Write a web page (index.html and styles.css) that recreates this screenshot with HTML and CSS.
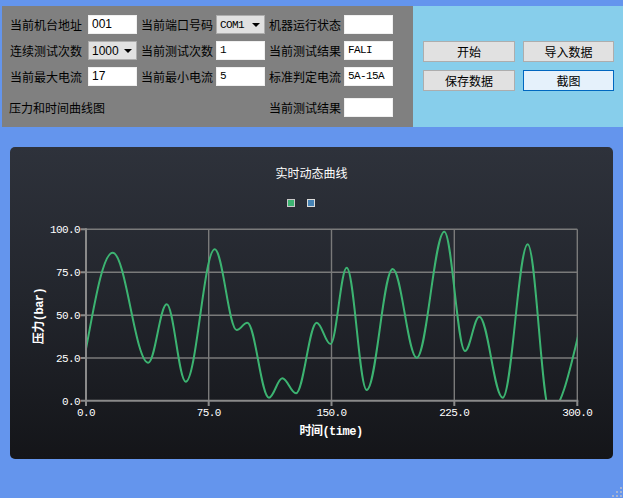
FILE: index.html
```html
<!DOCTYPE html>
<html lang="zh-CN">
<head>
<meta charset="utf-8">
<title>压力测试</title>
<link rel="stylesheet" href="styles.css">
</head>
<body>
<div class="top">
  <div class="params">
    <div class="lbl">当前机台地址</div>
    <div class="inp sans">001</div>
    <div class="lbl">当前端口号码</div>
    <div class="sel mono"><span>COM1</span><i class="arrow"></i></div>
    <div class="lbl">机器运行状态</div>
    <div class="inp mono"></div>

    <div class="lbl">连续测试次数</div>
    <div class="sel sans"><span>1000</span><i class="arrow"></i></div>
    <div class="lbl">当前测试次数</div>
    <div class="inp mono">1</div>
    <div class="lbl">当前测试结果</div>
    <div class="inp mono">FALI</div>

    <div class="lbl">当前最大电流</div>
    <div class="inp sans">17</div>
    <div class="lbl">当前最小电流</div>
    <div class="inp mono">5</div>
    <div class="lbl">标准判定电流</div>
    <div class="inp mono">5A-15A</div>

    <div class="lbl r4 wide">压力和时间曲线图</div>
    <div class="lbl r4 c5">当前测试结果</div>
    <div class="inp r4 c6"></div>
  </div>
  <div class="actions">
    <button class="btn">开始</button>
    <button class="btn">导入数据</button>
    <button class="btn">保存数据</button>
    <button class="btn focus">截图</button>
  </div>
</div>

<div class="chart">
  <svg class="plot" width="603" height="312" viewBox="10 147 603 312">
    <defs>
      <clipPath id="plotclip"><rect x="86" y="226" width="491.3" height="174.7"/></clipPath>
    </defs>
    <text class="title" x="311.5" y="178" text-anchor="middle">实时动态曲线</text>
    <rect x="287.5" y="199.5" width="7" height="7" fill="#3cb371" stroke="#c8c8c8"/>
    <rect x="307.5" y="199.5" width="7" height="7" fill="#4682b4" stroke="#dcdcdc"/>

    <g class="grid">
      <line x1="86" y1="229.3" x2="577.3" y2="229.3"/>
      <line x1="86" y1="272.3" x2="577.3" y2="272.3"/>
      <line x1="86" y1="315.3" x2="577.3" y2="315.3"/>
      <line x1="86" y1="358" x2="577.3" y2="358"/>
      <line x1="208.7" y1="229.3" x2="208.7" y2="400.7"/>
      <line x1="331.5" y1="229.3" x2="331.5" y2="400.7"/>
      <line x1="454.3" y1="229.3" x2="454.3" y2="400.7"/>
      <line x1="577.3" y1="229.3" x2="577.3" y2="400.7"/>
    </g>

    <path class="curve" clip-path="url(#plotclip)" d="M64,420 C81.7,420 95,252.7 112.7,252.7 C125.7,252.7 135.3,362.7 148.3,362.7 C155,362.7 160,304.3 166.7,304.3 C173.6,304.3 178.8,381.7 185.7,381.7 C196.3,381.7 204.1,249.3 214.7,249.3 C222.7,249.3 228.7,330 236.7,330 C240.6,330 243.4,322.7 247.3,322.7 C255.2,322.7 261.1,397.7 269,397.7 C273.8,397.7 277.5,378.3 282.3,378.3 C287.3,378.3 291,393.3 296,393.3 C303.5,393.3 309.2,322.7 316.7,322.7 C321.7,322.7 325.5,344 330.5,344 C336.4,344 340.8,267.7 346.7,267.7 C354,267.7 359.4,390 366.7,390 C376.2,390 383.2,269 392.7,269 C401.4,269 408,357.7 416.7,357.7 C426.7,357.7 434.3,231.7 444.3,231.7 C451.8,231.7 457.5,351 465,351 C470.2,351 474.1,316.7 479.3,316.7 C487.8,316.7 494.2,397.7 502.7,397.7 C511.8,397.7 518.6,244.3 527.7,244.3 C535.8,244.3 541.9,412 550,412 C570,412 585,265 605,265"/>

    <g class="axis">
      <line x1="86" y1="228.3" x2="86" y2="406"/>
      <line x1="85" y1="400.7" x2="578.3" y2="400.7"/>
      <line x1="80.5" y1="229.3" x2="86" y2="229.3"/>
      <line x1="80.5" y1="272.3" x2="86" y2="272.3"/>
      <line x1="80.5" y1="315.3" x2="86" y2="315.3"/>
      <line x1="80.5" y1="358" x2="86" y2="358"/>
      <line x1="80.5" y1="400.7" x2="86" y2="400.7"/>
      <line x1="208.7" y1="400.7" x2="208.7" y2="406"/>
      <line x1="331.5" y1="400.7" x2="331.5" y2="406"/>
      <line x1="454.3" y1="400.7" x2="454.3" y2="406"/>
      <line x1="577.3" y1="400.7" x2="577.3" y2="406"/>
    </g>

    <g class="tick">
      <text x="80" y="233.3" text-anchor="end">100.0</text>
      <text x="80" y="276.3" text-anchor="end">75.0</text>
      <text x="80" y="319.3" text-anchor="end">50.0</text>
      <text x="80" y="362" text-anchor="end">25.0</text>
      <text x="80" y="404.7" text-anchor="end">0.0</text>
      <text x="86" y="415.5" text-anchor="middle">0.0</text>
      <text x="208.7" y="415.5" text-anchor="middle">75.0</text>
      <text x="331.5" y="415.5" text-anchor="middle">150.0</text>
      <text x="454.3" y="415.5" text-anchor="middle">225.0</text>
      <text x="577.3" y="415.5" text-anchor="middle">300.0</text>
    </g>

    <text class="axtitle" transform="translate(43,316) rotate(-90)" text-anchor="middle">压力(bar)</text>
    <text class="axtitle" x="331" y="434.5" text-anchor="middle">时间(time)</text>
  </svg>
</div>

<svg class="grip" width="12" height="12" viewBox="0 0 12 12">
  <rect x="9" y="1" width="2" height="2"/>
  <rect x="5" y="5" width="2" height="2"/>
  <rect x="9" y="5" width="2" height="2"/>
  <rect x="1" y="9" width="2" height="2"/>
  <rect x="5" y="9" width="2" height="2"/>
  <rect x="9" y="9" width="2" height="2"/>
</svg>
</body>
</html>
```

FILE: styles.css
```css
html, body {
  margin: 0;
  padding: 0;
}

body {
  position: relative;
  width: 623px;
  height: 498px;
  overflow: hidden;
  background: #6495ed;
  font-family: "Noto Sans CJK SC", "Liberation Sans", sans-serif;
  font-size: 12px;
  color: #000;
}

.top {
  display: flex;
  margin-top: 6px;
  height: 121px;
}

.params {
  box-sizing: border-box;
  width: 411px;
  margin-left: 2px;
  padding: 9px 0 0 4px;
  background: #808080;
  display: grid;
  grid-template-columns: 82px 49px 79px 49px 79px 49px;
  grid-template-rows: 19px 19px 19px 24px;
  row-gap: 7px;
}

.lbl {
  padding-left: 4px;
  line-height: 19px;
  white-space: nowrap;
  font-size: 12px;
}

.inp {
  box-sizing: border-box;
  height: 19px;
  background: #fff;
  border: 1px solid #f0f0f0;
  padding-left: 3px;
  line-height: 17px;
  white-space: nowrap;
}

.sans {
  font-family: "Liberation Sans", sans-serif;
  font-size: 12px;
}

.mono {
  font-family: "Liberation Mono", monospace;
  font-size: 11px;
  letter-spacing: -0.6px;
}

.sel {
  box-sizing: border-box;
  height: 19px;
  background: #e1e1e1;
  border: 1px solid #adadad;
  display: flex;
  align-items: center;
  justify-content: space-between;
  padding: 0 4px 0 3px;
  white-space: nowrap;
}

.arrow {
  width: 0;
  height: 0;
  border-left: 4px solid transparent;
  border-right: 4px solid transparent;
  border-top: 4px solid #000;
}

.r4 {
  grid-row: 4;
  align-self: end;
}

.wide {
  grid-column: 1 / span 4;
  padding-left: 3px;
}

.c5 { grid-column: 5; }
.c6 { grid-column: 6; }

.actions {
  flex: 1;
  box-sizing: border-box;
  padding: 35px 0 0 10px;
  background: #87ceeb;
  display: grid;
  grid-template-columns: 92px 91px;
  grid-template-rows: 21px 21px;
  column-gap: 8px;
  row-gap: 8px;
  align-content: start;
}

.btn {
  box-sizing: border-box;
  margin: 0;
  padding: 0;
  height: 21px;
  background: #e1e1e1;
  border: 1px solid #adadad;
  font-family: "Noto Sans CJK SC", sans-serif;
  font-size: 12px;
  color: #000;
  line-height: 19px;
}

.btn.focus {
  background: #e5f1fb;
  border: 1px solid #0067c0;
}

.chart {
  margin: 20px 0 0 10px;
  width: 603px;
  height: 312px;
  border-radius: 5px;
  background: linear-gradient(to bottom, #2e323b 0%, #22252c 50%, #141519 100%);
  overflow: hidden;
}

.plot {
  display: block;
}

.title {
  fill: #ffffff;
  font-family: "Noto Sans CJK SC", sans-serif;
  font-size: 12px;
}

.grid line {
  stroke: #7a7a7a;
  stroke-width: 1.4;
}

.axis line {
  stroke: #8a8a8a;
  stroke-width: 2;
}

.curve {
  fill: none;
  stroke: #3cb371;
  stroke-width: 2;
}

.tick text {
  fill: #ffffff;
  font-family: "Liberation Mono", monospace;
  font-size: 11px;
  letter-spacing: -0.6px;
}

.axtitle {
  fill: #ffffff;
  font-family: "Liberation Mono", "Noto Sans CJK SC", monospace;
  font-size: 12px;
  font-weight: bold;
  letter-spacing: -0.5px;
}

.grip {
  position: absolute;
  right: 0;
  bottom: 0;
  fill: #a6b4d2;
}
```
